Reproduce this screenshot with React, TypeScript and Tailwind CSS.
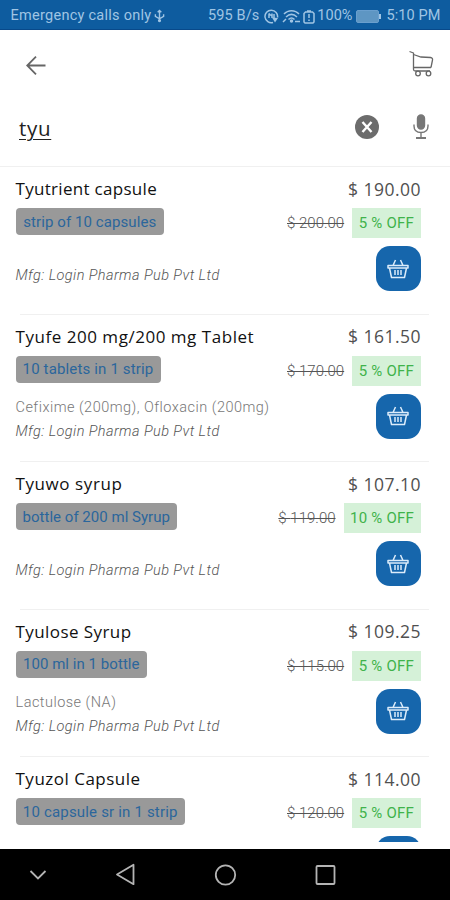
import React from 'react';

interface Product {
    id: number;
    name: string;
    pack: string;
    composition?: string;
    manufacturer?: string;
    price: string;
    mrp: string;
    discount: string;
    nameClass: string;
    packClass: string;
}

const products: Product[] = [
    {
        id: 1,
        name: 'Tyutrient capsule',
        pack: 'strip of 10 capsules',
        manufacturer: 'Login Pharma Pub Pvt Ltd',
        price: '190.00',
        mrp: '200.00',
        discount: '5 % OFF',
        nameClass: 'tracking-[0.3px]',
        packClass: 'w-[148.5px] tracking-[0.08px]',
    },
    {
        id: 2,
        name: 'Tyufe 200 mg/200 mg Tablet',
        pack: '10 tablets in 1 strip',
        composition: 'Cefixime (200mg), Ofloxacin (200mg)',
        manufacturer: 'Login Pharma Pub Pvt Ltd',
        price: '161.50',
        mrp: '170.00',
        discount: '5 % OFF',
        nameClass: 'tracking-[0.53px]',
        packClass: 'w-[145px] tracking-[0.15px]',
    },
    {
        id: 3,
        name: 'Tyuwo syrup',
        pack: 'bottle of 200 ml Syrup',
        manufacturer: 'Login Pharma Pub Pvt Ltd',
        price: '107.10',
        mrp: '119.00',
        discount: '10 % OFF',
        nameClass: 'tracking-[0.58px]',
        packClass: 'w-[161.5px] tracking-[0.02px]',
    },
    {
        id: 4,
        name: 'Tyulose Syrup',
        pack: '100 ml in 1 bottle',
        composition: 'Lactulose (NA)',
        manufacturer: 'Login Pharma Pub Pvt Ltd',
        price: '109.25',
        mrp: '115.00',
        discount: '5 % OFF',
        nameClass: 'tracking-[0.42px]',
        packClass: 'w-[131.5px] tracking-[0.05px]',
    },
    {
        id: 5,
        name: 'Tyuzol Capsule',
        pack: '10 capsule sr in 1 strip',
        price: '114.00',
        mrp: '120.00',
        discount: '5 % OFF',
        nameClass: 'tracking-[0.5px]',
        packClass: 'w-[169.5px] tracking-[0.18px]',
    },
];

export default function App() {
    return (
        <div className="flex h-[900px] w-[450px] flex-col overflow-hidden bg-white font-['Roboto',sans-serif]">
            <StatusBar />

            <header className="flex h-[70px] shrink-0 items-center justify-between pl-[26px] pr-[16px]">
                <svg width="20" height="20" viewBox="0 0 20 20" fill="none" stroke="#666" strokeWidth="1.8">
                    <path d="M19.5 10.5H1.5M10 1.7L1.2 10.5L10 19.3" />
                </svg>
                <CartIcon />
            </header>

            <div className="flex h-[67px] shrink-0 items-center border-b border-[#f0f0f0] pb-[12px] pl-[19px] pr-[20px]">
                <span className="flex-1 pt-[2px] font-['Open_Sans',sans-serif] text-[20.5px] leading-6 tracking-[0.7px] text-[#222] underline decoration-1 underline-offset-[3px]">
                    tyu
                </span>
                <svg width="24" height="24" viewBox="0 0 24 24" className="mr-[33px]">
                    <circle cx="12" cy="12" r="12" fill="#6c6c6c" />
                    <path d="M7.5 7L16.5 17M16.5 7L7.5 17" stroke="#fff" strokeWidth="2.4" />
                </svg>
                <MicIcon />
            </div>

            <main className="h-[675px] shrink-0 overflow-hidden">
                {products.map((product) => (
                    <ProductRow key={product.id} product={product} />
                ))}
            </main>

            <nav className="mt-[7px] flex h-[51px] shrink-0 items-center bg-black">
                <svg width="450" height="51" viewBox="0 0 450 51" fill="none" stroke="#b4b4b4" strokeWidth="1.8">
                    <path d="M30.5 22L38 29.5L45.5 22" />
                    <path d="M133.5 15.8V35.2L117 25.5Z" strokeLinejoin="round" />
                    <circle cx="225.5" cy="26" r="9.7" />
                    <rect x="316.5" y="17" width="18" height="18" rx="1" />
                </svg>
            </nav>
        </div>
    );
}

const ProductRow: React.FC<{ product: Product }> = ({ product }) => {
    return (
        <section className="relative h-[147.5px] pl-[15.5px] pr-[29.5px] pt-[10px]">
            <div className="flex h-[24px] items-center justify-between">
                <h2 className={`whitespace-nowrap font-['Open_Sans',sans-serif] text-[17px] font-medium text-[#111] ${product.nameClass}`}>
                    {product.name}
                </h2>
                <span className="-mr-[0.6px] whitespace-nowrap font-['Open_Sans',sans-serif] text-[17.5px] tracking-[0.5px] text-[#505050]">
                    $ {product.price}
                </span>
            </div>

            <div className="mt-[7px] flex h-[30px] items-start justify-between">
                <span className={`flex h-[27px] items-center justify-center whitespace-nowrap rounded-[4px] bg-[#999] pt-[1px] text-[15px] text-[#2b669c] ${product.packClass}`}>
                    {product.pack}
                </span>
                <div className="flex items-center">
                    <span className="mr-[8px] whitespace-nowrap pt-[1px] text-[15px] font-light text-[#555] line-through">$ {product.mrp}</span>
                    <span className="flex h-[30px] items-center whitespace-nowrap bg-[#d5f1d8] px-[6.5px] pt-[1px] text-[15px] tracking-[0.22px] text-[#3fb34b]">
                        {product.discount}
                    </span>
                </div>
            </div>

            <div className="flex items-start justify-between">
                <div className={product.composition ? 'pt-[10.5px]' : 'pt-[26px]'}>
                    {product.composition && (
                        <p className="h-[24px] whitespace-nowrap text-[14.5px] font-light leading-6 tracking-[0.48px] text-[#777]">
                            {product.composition}
                        </p>
                    )}
                    {product.manufacturer && (
                        <p className="h-[24px] whitespace-nowrap text-[14.5px] font-light italic leading-6 tracking-[0.43px] text-[#555]">
                            Mfg: {product.manufacturer}
                        </p>
                    )}
                </div>
                <button className="mt-[8px] flex h-[45px] w-[45px] items-center justify-center rounded-[14px] bg-[#1666ac]">
                    <BasketIcon />
                </button>
            </div>
            <hr className="absolute bottom-0 left-[20px] right-[21px] border-t-[1.5px] border-[#f0f0f0]" />
        </section>
    );
};

function StatusBar() {
    return (
        <div className="flex h-[30px] shrink-0 items-center border-b border-[#08498a] bg-[#0e5c9f] pl-[10.5px] pr-[9.5px] pt-[3px] text-[14.5px] text-[#a0c5e4]">
            <span className="tracking-[0.27px]">Emergency calls only</span>
            <svg width="11" height="14" viewBox="0 0 12 14" className="ml-[3px]" fill="none" stroke="#a0c5e4" strokeWidth="1.5">
                <path d="M6 1V13M1.5 5V7.5L6 10L10.5 7.5V5M4 3L6 1L8 3" />
                <circle cx="6" cy="12" r="1" />
            </svg>
            <span className="ml-auto tracking-[0.1px]">595 B/s</span>
            <svg width="15" height="15" viewBox="0 0 15 15" className="ml-[5px]" fill="none" stroke="#a0c5e4" strokeWidth="1.5">
                <path d="M9 13.5A6.3 6.3 0 1 1 13.5 8.5M5 4.5V9M5 4.5C7 7 8 7 8 4.5V9M10 5V9" />
                <path d="M8 8.5L14 9L11 13.5Z" fill="#a0c5e4" stroke="none" />
            </svg>
            <svg width="19" height="14" viewBox="0 0 19 14" className="ml-[3px]" fill="none" stroke="#a0c5e4" strokeWidth="1.5">
                <path d="M2 5C6 0.5 13 0.5 17 5M4 8C7.5 4.5 11.5 4.5 15 8M6.5 10.5C8.5 8.5 10.5 8.5 12.5 10.5M1 13L4 10M13 12.5H18" />
                <circle cx="9.5" cy="12" r="1" fill="#a0c5e4" />
            </svg>
            <svg width="12" height="15" viewBox="0 0 12 15" className="ml-[2px]" fill="none" stroke="#a0c5e4" strokeWidth="1.5">
                <path d="M4 2H8M2.5 3H9.5L11 4.5V13L10 14H2L1 13V4.5ZM6 5V9M6 10.5V12" />
            </svg>
            <span className="ml-[2px]">100%</span>
            <div className="ml-[4px] h-[13px] w-[23px] rounded-[2px] border border-[#6a9fce] bg-[#5e96c3]" />
            <div className="h-[5px] w-[2px] bg-[#a0c5e4]" />
            <span className="ml-[5px] tracking-[0.1px]">5:10 PM</span>
        </div>
    );
}

function CartIcon() {
    return (
        <svg width="25" height="27" viewBox="0 0 25 27" className="relative -top-[2px]" fill="none" stroke="#666" strokeWidth="1.3">
            <path d="M0.5 1.5L4.5 3V17.5H22" strokeLinejoin="round" />
            <path d="M4.5 4.5L12 7L21.5 7.5Q24 8 23.5 10L22 17.5M4.5 17.5V19.5Q4.5 21 6.5 21H21" />
            <circle cx="9" cy="23.5" r="2.3" fill="#fff" />
            <circle cx="19.5" cy="23.5" r="2.3" fill="#fff" />
        </svg>
    );
}

function MicIcon() {
    return (
        <svg width="18" height="26" viewBox="0 0 18 26" fill="none" stroke="#777" strokeWidth="1.4">
            <rect x="5.5" y="1" width="7" height="14" rx="3.5" fill="#777" />
            <path d="M2 10.5V12Q2 18.5 9 18.5Q16 18.5 16 12V10.5M9 18.5V23" />
            <path d="M4 24H14" strokeWidth="2" />
        </svg>
    );
}

function BasketIcon() {
    return (
        <svg width="22" height="20" viewBox="0 0 22 20" fill="none" stroke="#dcecfa" strokeWidth="1.5" strokeLinejoin="round">
            <path d="M1 6.5H21V9H1ZM2.5 9L4.5 18.5H17.5L19.5 9M8.5 1L6 6.5M13.5 1L16 6.5" />
            <path d="M8 11V16M11 11V16M14 11V16" />
        </svg>
    );
}
